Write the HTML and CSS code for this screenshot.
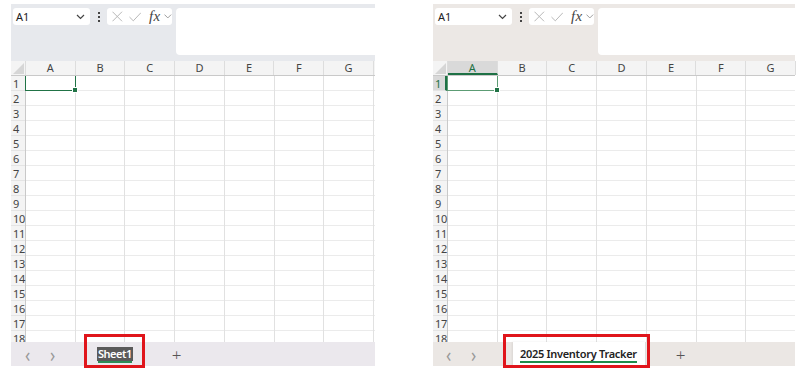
FILE: index.html
```
<!DOCTYPE html>
<html>
<head>
<meta charset="utf-8">
<link rel="stylesheet" href="styles.css">
</head>
<body>
<div class="wrap">
  <div class="panel cool">
    <div class="toolbar">
      <div class="namebox"><span>A1</span><svg width="9" height="6" viewBox="0 0 9 6"><path d="M1 1 L4.5 4.5 L8 1" fill="none" stroke="#444" stroke-width="1.2"/></svg></div>
      <div class="dots"><i></i><i></i><i></i></div>
      <div class="fxbox">
        <svg class="ic-x" width="11" height="11" viewBox="0 0 11 11"><path d="M0.5 0.5 L10.5 10.5 M10.5 0.5 L0.5 10.5" stroke="#b4b4b4" stroke-width="1"/></svg>
        <svg class="ic-check" width="13" height="10" viewBox="0 0 13 10"><path d="M0.5 5 L4.5 9 L12.5 0.5" fill="none" stroke="#b4b4b4" stroke-width="1"/></svg>
        <span class="fx">fx</span>
        <svg class="ic-chev" width="8" height="5" viewBox="0 0 8 5"><path d="M0.5 0.5 L4 4 L7.5 0.5" fill="none" stroke="#999" stroke-width="1"/></svg>
      </div>
      <div class="formula"></div>
    </div>
    <div class="colheads">
      <div class="corner"><svg width="11" height="11" viewBox="0 0 11 11"><path d="M11 0 L11 11 L0 11 Z" fill="#d6d6d6"/></svg></div>
      <div class="ch">A</div><div class="ch">B</div><div class="ch">C</div><div class="ch">D</div><div class="ch">E</div><div class="ch">F</div><div class="ch">G</div>
    </div>
    <div class="body">
      <div class="rowheads">
        <div class="rh">1</div><div class="rh">2</div><div class="rh">3</div><div class="rh">4</div><div class="rh">5</div><div class="rh">6</div><div class="rh">7</div><div class="rh">8</div><div class="rh">9</div><div class="rh">10</div><div class="rh">11</div><div class="rh">12</div><div class="rh">13</div><div class="rh">14</div><div class="rh">15</div><div class="rh">16</div><div class="rh">17</div><div class="rh">18</div>
      </div>
      <div class="cells"><div class="sel"></div></div>
    </div>
    <div class="tabbar">
      <span class="nav first">&#8249;</span>
      <span class="nav">&#8250;</span>
      <div class="tab editing"><span class="seltext">Sheet1</span></div>
      <span class="plus">+</span>
    </div>
    <div class="redbox left-box"></div>
  </div>

  <div class="panel warm">
    <div class="toolbar">
      <div class="namebox"><span>A1</span><svg width="9" height="6" viewBox="0 0 9 6"><path d="M1 1 L4.5 4.5 L8 1" fill="none" stroke="#444" stroke-width="1.2"/></svg></div>
      <div class="dots"><i></i><i></i><i></i></div>
      <div class="fxbox">
        <svg class="ic-x" width="11" height="11" viewBox="0 0 11 11"><path d="M0.5 0.5 L10.5 10.5 M10.5 0.5 L0.5 10.5" stroke="#b4b4b4" stroke-width="1"/></svg>
        <svg class="ic-check" width="13" height="10" viewBox="0 0 13 10"><path d="M0.5 5 L4.5 9 L12.5 0.5" fill="none" stroke="#b4b4b4" stroke-width="1"/></svg>
        <span class="fx">fx</span>
        <svg class="ic-chev" width="8" height="5" viewBox="0 0 8 5"><path d="M0.5 0.5 L4 4 L7.5 0.5" fill="none" stroke="#999" stroke-width="1"/></svg>
      </div>
      <div class="formula"></div>
    </div>
    <div class="colheads">
      <div class="corner"><svg width="11" height="11" viewBox="0 0 11 11"><path d="M11 0 L11 11 L0 11 Z" fill="#d6d6d6"/></svg></div>
      <div class="ch active">A</div><div class="ch">B</div><div class="ch">C</div><div class="ch">D</div><div class="ch">E</div><div class="ch">F</div><div class="ch">G</div>
    </div>
    <div class="body">
      <div class="rowheads">
        <div class="rh active">1</div><div class="rh">2</div><div class="rh">3</div><div class="rh">4</div><div class="rh">5</div><div class="rh">6</div><div class="rh">7</div><div class="rh">8</div><div class="rh">9</div><div class="rh">10</div><div class="rh">11</div><div class="rh">12</div><div class="rh">13</div><div class="rh">14</div><div class="rh">15</div><div class="rh">16</div><div class="rh">17</div><div class="rh">18</div>
      </div>
      <div class="cells"><div class="sel"></div></div>
    </div>
    <div class="tabbar">
      <span class="nav first">&#8249;</span>
      <span class="nav">&#8250;</span>
      <div class="tab named"><span class="tabtext">2025 Inventory Tracker</span></div>
      <span class="plus">+</span>
    </div>
    <div class="redbox right-box"></div>
  </div>
</div>
</body>
</html>
```
FILE: styles.css
```
* { box-sizing: border-box; }
html, body { margin: 0; padding: 0; background: #fff; }
body { font-family: "Noto Sans", "Open Sans", sans-serif; color: #333; width: 805px; height: 377px; overflow: hidden; }

.wrap { display: flex; gap: 58px; padding: 4px 0 0 11px; }

.panel { position: relative; height: 362px; display: flex; flex-direction: column; }
.panel.cool { width: 364px; background: #e7e9ed; }
.panel.warm { width: 362px; background: #ece8e5; }

.toolbar { height: 57px; display: flex; align-items: flex-start; padding: 4px 0 0 2px; }
.namebox { width: 77px; height: 17px; background: #fff; border-radius: 3px; display: flex; align-items: center; justify-content: space-between; padding: 0 5px 0 3px; font-size: 11px; color: #222; }
.dots { width: 17px; height: 17px; display: flex; flex-direction: column; align-items: center; justify-content: center; gap: 2px; }
.dots i { width: 2px; height: 2px; background: #444; display: block; }
.fxbox { width: 65px; height: 17px; background: #fff; border-radius: 3px; display: flex; align-items: center; padding: 0 0 0 5px; }
.ic-check { margin-left: 6px; }
.fx { font-family: "Liberation Serif", serif; font-style: italic; font-size: 15px; color: #444; line-height: 1; margin-left: 8px; letter-spacing: 0.3px; }
.ic-chev { margin-left: 4px; }
.formula { flex: 1; height: 47px; margin-left: 4px; background: #fff; border-radius: 4px 0 0 4px; }

.colheads { height: 15px; display: flex; background: #f4f4f4; border-bottom: 1px solid #c9c9c9; }
.corner { width: 15px; flex: 0 0 15px; display: flex; align-items: flex-end; justify-content: flex-end; padding: 0 1px 1px 0; border-right: 1px solid #dcdcdc; }
.ch { flex: 0 0 49.7px; font-size: 11px; line-height: 14px; text-align: center; color: #444; border-right: 1px solid #dddddd; }
.ch.active { background: #d9d9d9; color: #1e7145; border-bottom: 2px solid #1e7145; line-height: 13px; }

.body { height: 266px; display: flex; overflow: hidden; }
.rowheads { width: 15px; flex: 0 0 15px; background: #f4f4f4; border-right: 1px solid #c9c9c9; }
.rh { height: 15px; font-size: 11px; line-height: 15px; padding-left: 2px; color: #444; border-bottom: 1px solid #e4e4e4; letter-spacing: -0.3px; }
.rh.active { background: #d9d9d9; color: #1e7145; border-right: 2px solid #1e7145; }

.cells { flex: 1; position: relative; background-color: #fff;
  background-image:
    repeating-linear-gradient(to right, transparent 0, transparent 48.7px, #e1e1e1 48.7px, #e1e1e1 49.7px),
    repeating-linear-gradient(to bottom, transparent 0, transparent 14px, #ebebeb 14px, #ebebeb 15px);
}
.sel { width: 51px; height: 16px; margin: -1px 0 0 -1px; border: 1.5px solid #217346; position: relative; }
.warm .sel { border-color: #5c9c74; }
.sel::after { content: ""; position: absolute; right: -3px; bottom: -3px; width: 4px; height: 4px; background: #217346; border: 1px solid #fff; }

.tabbar { height: 24px; display: flex; align-items: center; position: relative; }
.cool .tabbar { background: #ebe8ed; }
.warm .tabbar { background: #ebe7e4; }
.nav { font-size: 17px; color: #999; width: 9px; line-height: 1; margin-left: 16px; display: inline-block; transform: scaleY(1.2); }
.nav.first { margin-left: 14px; }
.warm .nav.first { margin-left: 13px; }

.tab { height: 24px; display: flex; align-items: center; }
.tab.editing { margin-left: 38px; }
.seltext { background: #5a5a5a; color: #fff; font-weight: 600; font-size: 11px; line-height: 14px; padding: 0 1px; box-shadow: 0 3px 0 -1px #2e8b57; letter-spacing: -0.5px; }
.cool .plus { margin-left: 39px; }

.tab.named { margin-left: 33px; background: #fff; padding: 0 8px 0 7px; border-right: 1px solid #ddd; box-shadow: -1px 0 2px rgba(0,0,0,0.08); }
.tabtext { font-size: 11px; font-weight: 600; color: #222; line-height: 15px; border-bottom: 2px solid #1e8c4a; letter-spacing: -0.3px; }
.warm .plus { margin-left: 30px; }
.plus { font-size: 17px; color: #555; font-weight: 300; line-height: 1; }

.redbox { position: absolute; top: 330px; height: 34px; border: 3px solid #e0151b; }
.left-box { left: 73px; width: 61px; }
.right-box { left: 70px; width: 147px; }
```
